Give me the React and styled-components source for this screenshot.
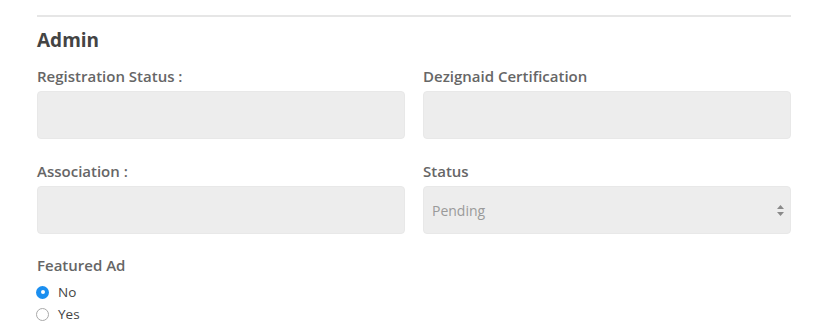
import React, {useState} from 'react';
import styled, {createGlobalStyle} from 'styled-components';

const GlobalStyle = createGlobalStyle`
    html, body {
        margin: 0;
        padding: 0;
        background: #ffffff;
    }
    body {
        font-family: "Open Sans", "Liberation Sans", Arial, sans-serif;
    }
`;

// 전체 폼
const Wrapper = styled.div`
    width: 832px;
    padding: 15px 41px 0 37px;
    box-sizing: border-box;
`;

const Divider = styled.div`
    height: 2px;
    background-color: #e6e6e6;
`;

const Title = styled.h3`
    margin: 11px 0 0;
    font-size: 19px;
    line-height: 24px;
    font-weight: 700;
    color: #444444;
`;

const Grid = styled.div`
    display: grid;
    grid-template-columns: 1fr 1fr;
    column-gap: 18px;
    row-gap: 22px;
    margin-top: 14px;
`;

const Field = styled.div`
    display: flex;
    flex-direction: column;
`;

const Label = styled.label`
    font-size: 15px;
    line-height: 20px;
    font-weight: 600;
    color: #666666;
    margin-bottom: ${p => p.gap || 5}px;
`;

const Input = styled.div`
    height: 48px;
    border-radius: 4px;
    background-color: #ededed;
    border: 1px solid #e8e8e8;
    box-sizing: border-box;
`;

const Select = styled.div`
    height: 48px;
    border-radius: 4px;
    background-color: #ededed;
    border: 1px solid #e8e8e8;
    box-sizing: border-box;
    display: flex;
    align-items: center;
    justify-content: space-between;
    padding: 0 6px 0 8px;
    font-size: 14px;
    color: #9a9a9a;
`;

const Arrows = styled.svg`
    width: 7px;
    height: 11px;
`;

const RadioGroup = styled.div`
    margin-top: 21px;
    display: flex;
    flex-direction: column;
`;

const RadioRow = styled.label`
    display: flex;
    align-items: center;
    gap: 9px;
    height: 22px;
    font-size: 13.5px;
    color: #444444;
    cursor: pointer;
`;

const RadioDot = styled.span`
    width: 13px;
    height: 13px;
    border-radius: 50%;
    box-sizing: border-box;
    margin-left: -1px;
    border: ${p => p.checked ? 'none' : '1px solid #a9a9a9'};
    background-color: ${p => p.checked ? '#1b8ff0' : '#ffffff'};
    display: flex;
    align-items: center;
    justify-content: center;
    &::after {
        content: '';
        width: 4px;
        height: 4px;
        border-radius: 50%;
        background: #ffffff;
        display: ${p => p.checked ? 'block' : 'none'};
    }
`;

const App = () => {
    const [featured, setFeatured] = useState('no');

    return (
        <Wrapper>
            <GlobalStyle/>
            <Divider/>
            <Title>Admin</Title>
            <Grid>
                <Field>
                    <Label>Registration Status :</Label>
                    <Input/>
                </Field>
                <Field>
                    <Label>Dezignaid Certification</Label>
                    <Input/>
                </Field>
                <Field>
                    <Label>Association :</Label>
                    <Input/>
                </Field>
                <Field>
                    <Label>Status</Label>
                    <Select>
                        <span>Pending</span>
                        <Arrows viewBox="0 0 7 11">
                            <path d="M3.5 0 L7 4 L0 4 Z" fill="#8a8a8a"/>
                            <path d="M3.5 11 L7 7 L0 7 Z" fill="#8a8a8a"/>
                        </Arrows>
                    </Select>
                </Field>
            </Grid>
            <RadioGroup>
                <Label gap={6}>Featured Ad</Label>
                <RadioRow onClick={() => setFeatured('no')}>
                    <RadioDot checked={featured === 'no'}/>
                    No
                </RadioRow>
                <RadioRow onClick={() => setFeatured('yes')}>
                    <RadioDot checked={featured === 'yes'}/>
                    Yes
                </RadioRow>
            </RadioGroup>
        </Wrapper>
    );
};

export default App;
